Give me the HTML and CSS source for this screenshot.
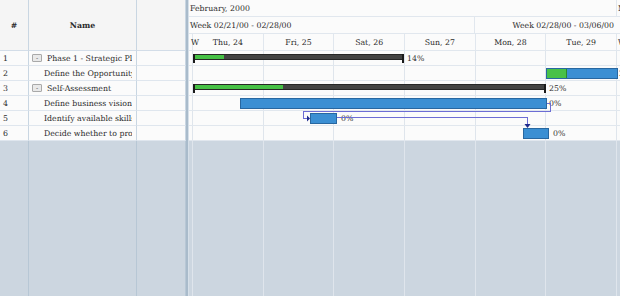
FILE: index.html
```html
<!DOCTYPE html>
<html lang="en">

<head>
  <meta charset="UTF-8">
  <title>Gantt - Strategic Plan</title>
  <link rel="stylesheet" href="styles.css">
</head>

<body>
  <div class="gantt">
    <div class="grid">
      <div class="grid-head num">#</div>
      <div class="grid-head">Name</div>
      <div class="grid-head"></div>

      <div class="cell num">1</div>
      <div class="cell name"><span class="toggle">-</span><span class="label">Phase 1 - Strategic Plan</span></div>
      <div class="cell"></div>

      <div class="cell num">2</div>
      <div class="cell name child"><span class="label">Define the Opportunity</span></div>
      <div class="cell"></div>

      <div class="cell num">3</div>
      <div class="cell name"><span class="toggle">-</span><span class="label">Self-Assessment</span></div>
      <div class="cell"></div>

      <div class="cell num">4</div>
      <div class="cell name child"><span class="label">Define business vision</span></div>
      <div class="cell"></div>

      <div class="cell num">5</div>
      <div class="cell name child"><span class="label">Identify available skills</span></div>
      <div class="cell"></div>

      <div class="cell num">6</div>
      <div class="cell name child"><span class="label">Decide whether to proceed</span></div>
      <div class="cell"></div>

      <div class="filler"></div>
      <div class="filler"></div>
      <div class="filler"></div>
    </div>

    <div class="splitter"></div>

    <div class="chart">
      <div class="scale">
        <div class="scale-row month">
          <div class="scale-cell feb">February, 2000</div>
          <div class="scale-cell rest">March, 2000</div>
        </div>
        <div class="scale-row week">
          <div class="scale-cell week-a">Week 02/21/00 - 02/28/00</div>
          <div class="scale-cell week-b">Week 02/28/00 - 03/06/00</div>
        </div>
        <div class="scale-row days">
          <div class="scale-cell stub">W</div>
          <div class="scale-cell day">Thu, 24</div>
          <div class="scale-cell day">Fri, 25</div>
          <div class="scale-cell day">Sat, 26</div>
          <div class="scale-cell day">Sun, 27</div>
          <div class="scale-cell day">Mon, 28</div>
          <div class="scale-cell day">Tue, 29</div>
          <div class="scale-cell rest">Wed, 01</div>
        </div>
      </div>

      <div class="chart-body">
        <div class="columns">
          <div class="col stub"></div>
          <div class="col day"></div>
          <div class="col day"></div>
          <div class="col day"></div>
          <div class="col day"></div>
          <div class="col day"></div>
          <div class="col day"></div>
          <div class="col rest"></div>
        </div>

        <div class="rows">
          <div class="row">
            <div class="bar summary" style="left: 4px; width: 211px;">
              <div class="done" style="width: 30px;"></div>
            </div>
            <span class="pct" style="left: 218px;">14%</span>
          </div>
          <div class="row">
            <div class="bar task" style="left: 357px; width: 72px;">
              <div class="done" style="width: 20px;"></div>
            </div>
            <span class="pct" style="left: 430px;">28%</span>
          </div>
          <div class="row">
            <div class="bar summary" style="left: 4px; width: 353px;">
              <div class="done" style="width: 89px;"></div>
            </div>
            <span class="pct" style="left: 360px;">25%</span>
          </div>
          <div class="row">
            <div class="bar task" style="left: 51px; width: 307px;"></div>
            <span class="pct" style="left: 360px;">0%</span>
          </div>
          <div class="row">
            <div class="bar task" style="left: 121px; width: 27px;"></div>
            <span class="pct" style="left: 152px;">0%</span>
          </div>
          <div class="row">
            <div class="bar task" style="left: 334px; width: 26px;"></div>
            <span class="pct" style="left: 364px;">0%</span>
          </div>
        </div>

        <!-- dependency links -->
        <svg class="links" width="432" height="100" shape-rendering="crispEdges">
          <polyline points="358,52.5 361.5,52.5 361.5,60.5 114.5,60.5 114.5,67.5 119,67.5" />
          <polygon class="head" points="118,64.5 121,67.5 118,70.5" shape-rendering="auto" />
          <polyline points="148,66.5 338.5,66.5 338.5,74" />
          <polygon class="head" points="335.5,73 341.5,73 338.5,77" shape-rendering="auto" />
        </svg>
      </div>
    </div>
  </div>
</body>

</html>
```

FILE: styles.css
```css
* {
  margin: 0;
  padding: 0;
  box-sizing: border-box;
}

body {
  font-family: 'DejaVu Serif', serif;
  font-size: 7.8px;
  color: #2b2b2b;
  background: #fff;
}

.gantt {
  display: flex;
  height: 296px;
  background: #ccd6e0;
  overflow: hidden;
}

/* left grid */

.grid {
  width: 186px;
  flex: none;
  display: grid;
  grid-template-columns: 29px 108px 49px;
  grid-template-rows: 51px repeat(6, 15px) 1fr;
}

.grid-head {
  display: flex;
  align-items: center;
  justify-content: center;
  background: #f5f5f5;
  border-right: 1px solid #c9d6e2;
  border-bottom: 1px solid #d3dde8;
  font-weight: bold;
}

.cell {
  display: flex;
  align-items: center;
  background: #fbfbfb;
  border-right: 1px solid #c9d6e2;
  border-bottom: 1px solid #dfe6ee;
  white-space: nowrap;
  overflow: hidden;
}

.cell.num {
  padding-left: 3px;
}

.cell.name {
  padding-left: 3px;
  padding-right: 4px;
}

.cell.name.child {
  padding-left: 15px;
}

.label {
  flex: 1;
  min-width: 0;
  overflow: hidden;
}

.toggle {
  width: 10px;
  height: 8px;
  margin-right: 5px;
  flex: none;
  display: flex;
  align-items: center;
  justify-content: center;
  border: 1px solid #a9a9a9;
  border-radius: 1px;
  background: #e9e9e9;
  font-family: 'DejaVu Sans', sans-serif;
  font-size: 6px;
  line-height: 1;
  color: #444;
}

.filler {
  border-right: 1px solid #b7c7d5;
}

.splitter {
  width: 2px;
  flex: none;
  background: #a9bbcb;
  border-right: 1px solid #d6e0e9;
  box-sizing: content-box;
}

/* chart */

.chart {
  flex: 1;
  display: flex;
  flex-direction: column;
  overflow: hidden;
  min-width: 0;
}

.scale {
  background: #fbfbfb;
}

.scale-row {
  display: flex;
  height: 17px;
  border-bottom: 1px solid #e1e7ee;
}

.scale-cell {
  display: flex;
  align-items: center;
  white-space: nowrap;
  flex: none;
  border-right: 1px solid #e1e7ee;
}

.month .feb {
  width: 428px;
  padding-left: 1px;
}

.week .week-a {
  width: 286px;
  padding-left: 1px;
}

.week .week-b {
  flex: 1;
  justify-content: flex-end;
  padding-right: 6px;
  border-right: none;
}

.scale-cell.rest {
  flex: 1;
  padding-left: 1px;
  border-right: none;
  overflow: hidden;
}

.stub {
  width: 4px;
  padding-left: 2px;
}

.days .day {
  width: 70.67px;
  justify-content: center;
}

.chart-body {
  flex: 1;
  position: relative;
  background: linear-gradient(#fbfbfb 0, #fbfbfb 90px, #ccd6e0 90px);
}

.columns {
  position: absolute;
  inset: 0;
  display: flex;
}

.col {
  flex: none;
  border-right: 1px solid #dfe5ec;
}

.col.day {
  width: 70.67px;
}

.col.rest {
  flex: 1;
  border-right: none;
}

.rows {
  position: relative;
}

.row {
  position: relative;
  height: 15px;
  border-bottom: 1px solid #e1e7ee;
}

.bar {
  position: absolute;
  top: 2px;
  overflow: hidden;
}

.bar.task {
  height: 11px;
  background: #3b8fd3;
  border: 1px solid #2867a0;
}

.bar.task .done {
  height: 100%;
  background: #48c148;
  border-right: 1px solid #2d8a2d;
}

.bar.summary {
  top: 3px;
  height: 6px;
  background: #434343;
  border: 1px solid #262626;
  overflow: visible;
}

.bar.summary .done {
  height: 100%;
  background: #45c045;
}

.bar.summary::before,
.bar.summary::after {
  content: '';
  position: absolute;
  top: -1px;
  width: 2px;
  height: 9px;
  background: #1a1a1a;
}

.bar.summary::before {
  left: -1px;
}

.bar.summary::after {
  right: -1px;
}

.pct {
  position: absolute;
  top: 0;
  line-height: 15px;
  white-space: nowrap;
  color: #333;
}

.links {
  position: absolute;
  left: 0;
  top: 0;
  pointer-events: none;
}

.links polyline {
  fill: none;
  stroke: #6c6cd4;
  stroke-width: 1;
}

.links .head {
  fill: #1e2a8c;
}
```
